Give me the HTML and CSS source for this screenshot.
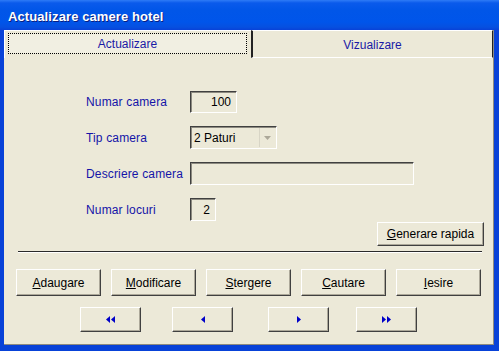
FILE: index.html
```html
<!DOCTYPE html>
<html>
<head>
<meta charset="utf-8">
<link rel="stylesheet" href="styles.css">
</head>
<body>
<div class="window">
  <div class="titlebar"><span class="title">Actualizare camere hotel</span></div>
  <div class="client">
    <div class="tabs">
      <div class="tab active"><span class="focus">Actualizare</span></div>
      <div class="tab inactive">Vizualizare</div>
    </div>
    <div class="page">
      <div class="form">
        <div class="row"><span class="label">Numar camera</span><div class="field num w-nr">100</div></div>
        <div class="row"><span class="label">Tip camera</span>
          <div class="field select w-tip"><span class="sel-text">2 Paturi</span><span class="sel-btn"><svg width="7" height="4" viewBox="0 0 7 4"><polygon points="0,0 7,0 3.5,4" fill="#ACA899"/></svg></span></div>
        </div>
        <div class="row"><span class="label">Descriere camera</span><div class="field w-desc"></div></div>
        <div class="row"><span class="label">Numar locuri</span><div class="field num w-loc">2</div></div>
      </div>
      <div class="gen-row"><button class="btn gen"><u>G</u>enerare rapida</button></div>
      <div class="sep"></div>
      <div class="actions">
        <button class="btn act"><u>A</u>daugare</button>
        <button class="btn act"><u>M</u>odificare</button>
        <button class="btn act"><u>S</u>tergere</button>
        <button class="btn act"><u>C</u>autare</button>
        <button class="btn act"><u>I</u>esire</button>
      </div>
      <div class="nav">
        <button class="btn navb"><svg width="9" height="7" viewBox="0 0 9 7"><polygon points="4,0 4,7 0,3.5" fill="#0000C8"/><polygon points="9,0 9,7 5,3.5" fill="#0000C8"/></svg></button>
        <button class="btn navb"><svg width="4" height="7" viewBox="0 0 4 7"><polygon points="4,0 4,7 0,3.5" fill="#0000C8"/></svg></button>
        <button class="btn navb"><svg width="4" height="7" viewBox="0 0 4 7"><polygon points="0,0 0,7 4,3.5" fill="#0000C8"/></svg></button>
        <button class="btn navb"><svg width="9" height="7" viewBox="0 0 9 7"><polygon points="0,0 0,7 4,3.5" fill="#0000C8"/><polygon points="5,0 5,7 9,3.5" fill="#0000C8"/></svg></button>
      </div>
    </div>
  </div>
</div>
</body>
</html>
```
FILE: styles.css
```css
html, body {
  margin: 0;
  padding: 0;
  background: #ffffff;
}
.window {
  width: 499px;
  height: 351px;
  box-sizing: border-box;
  padding: 0 5px 6px 4px;
  background: #0842D8;
  display: flex;
  flex-direction: column;
  font-family: "Liberation Sans", Arial, sans-serif;
  font-size: 12px;
}
.titlebar {
  height: 30px;
  margin: 0 -5px 0 -4px;
  padding-left: 8px;
  display: flex;
  align-items: center;
  background: linear-gradient(#2E7BF6 0, #0A5AEB 3px, #0156E8 10px, #0055EA 22px, #0650E0 27px, #0842D8 30px);
}
.title {
  color: #fff;
  font-weight: bold;
  font-size: 13px;
  letter-spacing: 0.1px;
  text-shadow: 1px 1px 0 #0A1E80;
  margin-top: 2px;
}
.client {
  flex: 1;
  background: #ECE9D8;
  display: flex;
  flex-direction: column;
  border-right: 1px solid #8C8A80;
  border-bottom: 1px solid #8C8A80;
}
.tabs {
  display: flex;
  height: 28px;
}
.tab {
  box-sizing: border-box;
  height: 28px;
  display: flex;
  align-items: center;
  justify-content: center;
  color: #1A1AA6;
  font-size: 12px;
}
.tab.active {
  width: 247px;
  border-top: 1px solid #fff;
  border-left: 1px solid #fff;
  padding: 2px 4px 4px 3px;
}
.focus {
  flex: 1;
  height: 100%;
  box-sizing: border-box;
  border: 1px dotted #000;
  display: flex;
  align-items: center;
  justify-content: center;
  background: #F1EFE2;
}
.tab.inactive {
  flex: 1;
  border-top: 1px solid #fff;
  border-left: 2px solid #222;
  border-right: 1px solid #222;
  border-bottom: 1px solid #fff;
  padding-top: 2px;
}
.page {
  flex: 1;
  display: flex;
  flex-direction: column;
}
.form {
  margin-top: 32px;
  padding-left: 82px;
  display: flex;
  flex-direction: column;
  gap: 13px;
}
.row {
  display: flex;
  align-items: center;
  height: 23px;
}
.label {
  width: 104px;
  color: #1414A8;
  font-size: 12px;
  letter-spacing: 0.15px;
}
.field {
  box-sizing: border-box;
  height: 23px;
  border-top: 1px solid #404040;
  border-left: 1px solid #404040;
  border-right: 1px solid #fff;
  border-bottom: 1px solid #fff;
  box-shadow: inset 1px 1px 0 #8C8A80;
  color: #000;
  font-size: 12px;
  display: flex;
  align-items: center;
}
.num {
  justify-content: flex-end;
  padding-right: 5px;
}
.w-nr { width: 47px; height: 22px; }
.w-tip { width: 87px; }
.w-desc { width: 224px; }
.w-loc { width: 26px; }
.select {
  justify-content: space-between;
  padding: 1px 1px 1px 3px;
}
.sel-btn {
  width: 16px;
  height: 100%;
  box-sizing: border-box;
  display: flex;
  align-items: center;
  justify-content: center;
  border-left: 1px solid #D8D5C6;
}
.btn {
  font-family: "Liberation Sans", Arial, sans-serif;
  font-size: 12px;
  color: #000;
  background: #ECE9D8;
  box-sizing: border-box;
  border-style: solid;
  border-width: 1px;
  border-color: #fff #404040 #404040 #fff;
  box-shadow: inset -1px -1px 0 #ACA899;
  padding: 0;
  margin: 0;
  display: flex;
  align-items: center;
  justify-content: center;
}
.btn u { text-decoration: underline; }
.gen-row {
  display: flex;
  justify-content: flex-end;
  padding-right: 9px;
  margin-top: 1px;
}
.gen {
  width: 107px;
  height: 24px;
}
.sep {
  margin: 5px 0 0 14px;
  width: 464px;
  height: 1px;
  background: #2A2A2A;
  border-bottom: 1px solid #fff;
}
.actions {
  display: flex;
  gap: 10px;
  margin-top: 16px;
  padding-left: 12px;
}
.act {
  width: 85px;
  height: 27px;
}
.nav {
  display: grid;
  grid-template-columns: 92px 96px 88px 61px;
  margin-top: 11px;
  padding-left: 76px;
}
.navb {
  width: 61px;
  height: 25px;
}
```
